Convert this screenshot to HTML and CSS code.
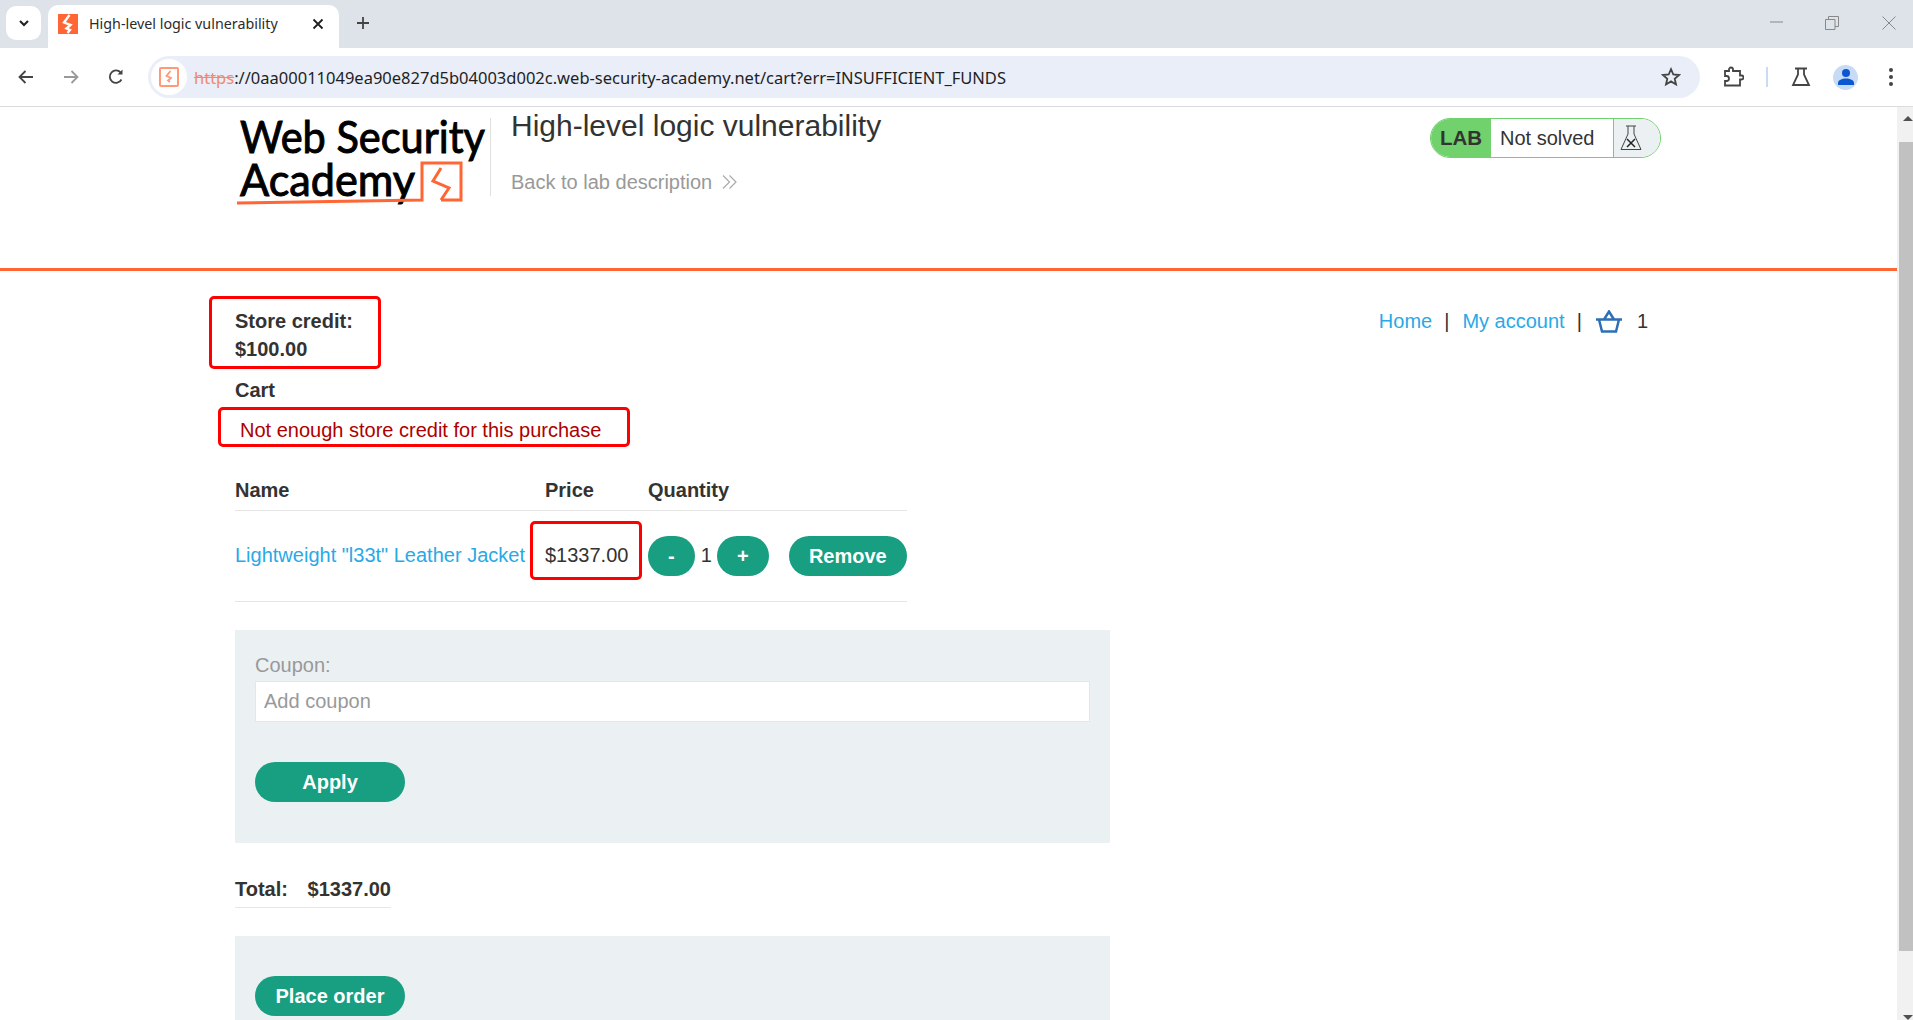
FILE: index.html
```html
<!DOCTYPE html>
<html lang="en">

<head>
    <meta charset="UTF-8">
    <meta name="viewport" content="width=device-width, initial-scale=1.0">
    <title>High-level logic vulnerability</title>
    <link rel="stylesheet" href="styles.css">
</head>

<body>
    <div class="tabstrip">
        <button class="tab-search">
            <svg width="14" height="14" viewBox="0 0 14 14"><path d="M3 5l4 4 4-4" fill="none" stroke="#1f1f1f" stroke-width="2"/></svg>
        </button>
        <div class="tab">
            <svg class="favicon" width="20" height="20" viewBox="0 0 20 20"><rect width="20" height="20" fill="#ff6633"/><path d="M11.500 1L6 8.500l6.500 2.500-4 3.500 3.500 1.500-2.500 3" fill="none" stroke="#fff" stroke-width="2.400"/></svg>
            <span class="tab-title">High-level logic vulnerability</span>
            <svg width="14" height="14" viewBox="0 0 14 14"><path d="M2.500 2.500l9 9M11.500 2.500l-9 9" stroke="#1f1f1f" stroke-width="1.800"/></svg>
        </div>
        <svg class="new-tab" width="16" height="16" viewBox="0 0 16 16"><path d="M8 2v12M2 8h12" stroke="#444" stroke-width="1.800"/></svg>
        <div class="window-controls">
            <svg width="18" height="12" viewBox="0 0 18 12"><path d="M1 6h13" stroke="#888" stroke-width="1"/></svg>
            <svg class="restore" width="14" height="14" viewBox="0 0 14 14"><path d="M.5 3.500h9.500v10H.5zM3.500 3.500v-3h10v10H10" fill="none" stroke="#888"/></svg>
            <svg width="14" height="14" viewBox="0 0 14 14"><path d="M.5.5l13 13M13.500.5l-13 13" stroke="#888"/></svg>
        </div>
    </div>

    <div class="toolbar">
        <svg class="nav-icon" width="20" height="20" viewBox="0 0 20 20"><path d="M17 10H4M9.500 4L3.500 10l6 6" fill="none" stroke="#444" stroke-width="1.800"/></svg>
        <svg class="nav-icon" width="20" height="20" viewBox="0 0 20 20"><path d="M3 10h13M10.500 4l6 6-6 6" fill="none" stroke="#999" stroke-width="1.800"/></svg>
        <svg class="nav-icon" width="20" height="20" viewBox="0 0 20 20"><path d="M15.500 12.500A6.200 6.200 0 1 1 15 6" fill="none" stroke="#444" stroke-width="1.800"/><path d="M16.500 2.500v5h-5z" fill="#444"/></svg>
        <div class="omnibox">
            <span class="site-icon">
                <svg width="20" height="20" viewBox="0 0 20 20"><rect x="1" y="1" width="18" height="18" rx="1" fill="#fff" stroke="#ff9a78" stroke-width="2"/><path d="M11.500 4L7.500 9l4.500 2-3 2.500 2 1.500" fill="none" stroke="#ff9a78" stroke-width="1.800"/></svg>
            </span>
            <span class="url"><span class="url-scheme">https</span>://0aa00011049ea90e827d5b04003d002c.web-security-academy.net/cart?err=INSUFFICIENT_FUNDS</span>
            <svg class="star" width="20" height="20" viewBox="0 0 20 20"><path d="M10 2.200l2.300 5.300 5.700.5-4.300 3.800 1.300 5.600-5-3-5 3 1.300-5.600L2 8l5.700-.5z" fill="none" stroke="#444" stroke-width="1.800"/></svg>
        </div>
        <div class="toolbar-actions">
            <svg class="extensions" width="22" height="22" viewBox="0 0 22 22"><path d="M3 5h4V3.500a2 2 0 0 1 4 0V5h7v4.500h1.500a2 2 0 0 1 0 4H18V19.500H3V15h1.500a2.500 2.500 0 0 0 0-5H3z" fill="none" stroke="#444" stroke-width="1.800"/></svg>
            <span class="toolbar-divider"></span>
            <svg class="labs" width="20" height="20" viewBox="0 0 20 20"><path d="M4 1.500h12M7 1.500v6L2 18h16L13 7.500v-6" fill="none" stroke="#444" stroke-width="1.800"/></svg>
            <span class="avatar">
                <svg width="18" height="18" viewBox="0 0 18 18"><circle cx="9" cy="5" r="4" fill="#0b57d0"/><path d="M1 17v-2c0-3 4-4.500 8-4.500s8 1.500 8 4.500v2z" fill="#0b57d0"/></svg>
            </span>
            <svg width="6" height="20" viewBox="0 0 6 20"><circle cx="3" cy="3" r="2" fill="#444"/><circle cx="3" cy="10" r="2" fill="#444"/><circle cx="3" cy="17" r="2" fill="#444"/></svg>
        </div>
    </div>

    <div class="viewport">
        <div class="page">
            <header class="academy-header">
                <svg class="logo" width="256" height="100" viewBox="0 0 256 100">
                    <text class="logo-text" x="8" y="46" textLength="245" lengthAdjust="spacingAndGlyphs">Web Security</text>
                    <text class="logo-text" x="8" y="89" textLength="175" lengthAdjust="spacingAndGlyphs">Academy</text>
                    <path d="M5 96c55-1 110-2 185-3V56h39v37h-20" fill="none" stroke="#ff6633" stroke-width="3"/>
                    <path d="M209 61l-8 13 16 7-8 12" fill="none" stroke="#ff6633" stroke-width="3"/>
                </svg>
                <div class="lab-title">
                    <h2>High-level logic vulnerability</h2>
                    <a class="back-link" href="#">Back to lab description
                        <svg width="16" height="16" viewBox="0 0 16 16"><path d="M1 1.500L7.500 8 1 14.500M7.500 1.500L14 8l-6.500 6.500" fill="none" stroke="#aaa" stroke-width="1.200"/></svg>
                    </a>
                </div>
                <div class="lab-status">
                    <span class="lab-label">LAB</span>
                    <span class="lab-state">Not solved</span>
                    <span class="lab-icon">
                        <svg width="22" height="26" viewBox="0 0 22 26"><path d="M6 1h10M8 1v8L1 24.500h20L14 9V1" fill="none" stroke="#444" stroke-width="1"/><path d="M7 14l8 8M15 14l-8 8" stroke="#222" stroke-width="1.500"/></svg>
                    </span>
                </div>
            </header>

            <main class="container">
                <div class="top-row">
                    <div class="store-credit marked">
                        <div>Store credit:</div>
                        <div>$100.00</div>
                    </div>
                    <nav class="site-nav">
                        <a href="#">Home</a>
                        <span class="sep">|</span>
                        <a href="#">My account</a>
                        <span class="sep">|</span>
                        <svg width="28" height="23" viewBox="0 0 28 23"><path d="M1 9.500h26M4 9.500l3 12h14l3-12M9 9.500L14 1.500l5 8" fill="none" stroke="#2c6fb5" stroke-width="2.500"/></svg>
                        <span class="cart-count">1</span>
                    </nav>
                </div>

                <p class="cart-title">Cart</p>
                <p class="error marked">Not enough store credit for this purchase</p>

                <table class="cart-table">
                    <colgroup>
                        <col class="col-name">
                        <col class="col-price">
                        <col class="col-qty">
                    </colgroup>
                    <thead>
                        <tr>
                            <th>Name</th>
                            <th>Price</th>
                            <th>Quantity</th>
                        </tr>
                    </thead>
                    <tbody>
                        <tr>
                            <td><a href="#">Lightweight "l33t" Leather Jacket</a></td>
                            <td><span class="price marked">$1337.00</span></td>
                            <td>
                                <div class="qty">
                                    <button class="btn btn-minus">-</button>
                                    <span class="qty-value">1</span>
                                    <button class="btn btn-plus">+</button>
                                    <button class="btn btn-remove">Remove</button>
                                </div>
                            </td>
                        </tr>
                    </tbody>
                </table>

                <form class="panel coupon-panel">
                    <label for="coupon">Coupon:</label>
                    <input id="coupon" type="text" placeholder="Add coupon">
                    <button type="button" class="btn btn-wide">Apply</button>
                </form>

                <div class="total">
                    <span>Total:</span>
                    <span>$1337.00</span>
                </div>

                <div class="panel order-panel">
                    <button class="btn btn-wide">Place order</button>
                </div>
            </main>
        </div>

        <div class="scrollbar">
            <span class="arrow-up"></span>
            <span class="thumb"></span>
            <span class="arrow-down"></span>
        </div>
    </div>
</body>

</html>
```

FILE: styles.css
```css
*,
*::before,
*::after {
    box-sizing: border-box;
}

html,
body {
    height: 100%;
}

body {
    margin: 0;
    display: flex;
    flex-direction: column;
    overflow: hidden;
    background-color: #fff;
    color: #333332;
    font-family: 'Liberation Sans', Arial, sans-serif;
    font-size: 20px;
}

a {
    color: #29a9e6;
    text-decoration: none;
}

svg {
    display: block;
    flex: none;
}

/* browser chrome */
.tabstrip {
    flex: none;
    height: 48px;
    display: flex;
    align-items: flex-start;
    background-color: #dee3ea;
}

.tab-search {
    width: 35px;
    height: 34px;
    margin: 6px 7px 0 6px;
    padding: 0;
    border: none;
    border-radius: 10px;
    background-color: #fff;
    display: flex;
    align-items: center;
    justify-content: center;
}

.tab {
    width: 291px;
    height: 43px;
    margin-top: 5px;
    padding: 0 14px 6px 10px;
    display: flex;
    align-items: center;
    background-color: #fff;
    border-radius: 10px 10px 0 0;
    font-family: 'Noto Sans', sans-serif;
    font-size: 14.3px;
    color: #2b2b2b;
}

.tab-title {
    margin-left: 11px;
    flex: 1;
}

.new-tab {
    margin: 15px 0 0 16px;
}

.window-controls {
    margin-left: auto;
    padding: 16px 17px 0 0;
    display: flex;
    gap: 38px;
}

.restore {
    margin-right: 5px;
}

.toolbar {
    flex: none;
    height: 59px;
    padding: 0 16px;
    display: flex;
    align-items: center;
    background-color: #fff;
    border-bottom: 1px solid #dcdcdc;
    border-radius: 8px 8px 0 0;
}

.nav-icon {
    margin-right: 25px;
}

.omnibox {
    width: 1552px;
    height: 42px;
    margin-left: -3px;
    padding: 0 19px 0 3px;
    display: flex;
    align-items: center;
    background-color: #e9eef8;
    border-radius: 21px;
    font-family: 'Noto Sans', sans-serif;
    font-size: 16.5px;
    color: #1f1f1f;
}

.site-icon {
    width: 36px;
    height: 36px;
    display: flex;
    align-items: center;
    justify-content: center;
    background-color: #fff;
    border-radius: 50%;
}

.url {
    margin-left: 7px;
    flex: 1;
    white-space: nowrap;
}

.url-scheme {
    color: #ee8b6f;
    text-decoration: line-through;
}

.toolbar-actions {
    margin-left: 22px;
    display: flex;
    align-items: center;
}

.toolbar-divider {
    width: 2px;
    height: 20px;
    margin: 0 23px 0 22px;
    background-color: #c9dcf5;
}

.avatar {
    width: 25px;
    height: 25px;
    margin: 0 30px 0 22px;
    display: flex;
    align-items: center;
    justify-content: center;
    background-color: #c7dbf7;
    border-radius: 50%;
}

/* page area */
.viewport {
    flex: 1;
    min-height: 0;
    display: flex;
}

.page {
    flex: 1;
    min-width: 0;
    overflow: hidden;
}

.scrollbar {
    flex: none;
    width: 16px;
    display: flex;
    flex-direction: column;
    align-items: flex-end;
    background-color: #f1f1f1;
}

.arrow-up {
    margin: 9px 0 0;
    border-left: 5px solid transparent;
    border-right: 5px solid transparent;
    border-bottom: 5px solid #505050;
}

.thumb {
    width: 14px;
    height: 809px;
    margin-top: 21px;
    background-color: #c1c1c1;
}

.arrow-down {
    margin-top: 64px;
    border-left: 5px solid transparent;
    border-right: 5px solid transparent;
    border-top: 5px solid #505050;
}

/* lab header */
.academy-header {
    height: 164px;
    padding: 0 236px 0 232px;
    display: flex;
    align-items: flex-start;
    border-bottom: 3px solid #ff6633;
}

.logo {
    overflow: visible;
}

.logo-text {
    font-family: 'Lato', sans-serif;
    font-size: 45px;
    font-weight: 400;
    fill: #000;
    stroke: #000;
    stroke-width: 1px;
}

.lab-title {
    margin-left: 2px;
    padding-left: 21px;
    position: relative;
    flex: 1;
}

.lab-title::before {
    content: "";
    position: absolute;
    left: 0;
    top: 11px;
    width: 1px;
    height: 78px;
    background-color: #e0e0e0;
}

.lab-title h2 {
    margin: 0;
    font-size: 30px;
    font-weight: 400;
    line-height: 38px;
}

.back-link {
    margin-top: 23px;
    display: flex;
    align-items: center;
    gap: 10px;
    color: #999;
    line-height: 28px;
}

.lab-status {
    width: 231px;
    height: 40px;
    margin-top: 11px;
    display: flex;
    border: 1px solid #70d16d;
    border-radius: 20px;
    overflow: hidden;
}

.lab-label {
    width: 60px;
    display: flex;
    align-items: center;
    justify-content: center;
    background-color: #70d16d;
    font-weight: 700;
    font-size: 20.5px;
}

.lab-state {
    width: 123px;
    padding-left: 9px;
    display: flex;
    align-items: center;
    border-right: 1px solid #70d16d;
}

.lab-icon {
    flex: 1;
    padding-left: 6px;
    display: flex;
    align-items: center;
    background-color: #ebf0f2;
}

/* cart content */
.container {
    padding: 36px 0 0 235px;
    margin-right: 249px;
}

.top-row {
    display: flex;
    justify-content: space-between;
}

.store-credit {
    font-weight: 700;
    line-height: 28px;
}

.marked {
    position: relative;
}

.marked::after {
    content: "";
    position: absolute;
    border: 3px solid #f00;
    border-radius: 5px;
    pointer-events: none;
}

.store-credit::after {
    left: -26px;
    top: -11px;
    width: 172px;
    height: 73px;
}

.site-nav {
    height: 28px;
    display: flex;
    align-items: center;
}

.sep {
    margin: 0 13px 0 12px;
}

.cart-count {
    margin-left: 14px;
}

.cart-title {
    margin: 13px 0 0;
    font-weight: 700;
    line-height: 28px;
}

.error {
    margin: 12px 0 0 5px;
    color: #ae0000;
    line-height: 28px;
}

.error::after {
    left: -22px;
    top: -9px;
    width: 412px;
    height: 40px;
}

.cart-table {
    width: 672px;
    margin: 34px 0 0;
    table-layout: fixed;
    border-collapse: collapse;
}

.col-name {
    width: 310px;
}

.col-price {
    width: 103px;
}

.cart-table th {
    height: 32px;
    padding: 0 0 6px;
    text-align: left;
    font-weight: 700;
    border-bottom: 1px solid #e6e6e6;
}

.cart-table td {
    height: 91px;
    padding: 0;
    border-bottom: 1px solid #e6e6e6;
}

.price::after {
    left: -15px;
    top: -23px;
    width: 112px;
    height: 59px;
}

.qty {
    display: flex;
    align-items: center;
}

.qty-value {
    margin: 0 5px 0 6px;
}

.btn {
    height: 40px;
    padding: 1px 0 0;
    border: none;
    border-radius: 20px;
    background-color: #189e80;
    color: #fff;
    font-family: inherit;
    font-size: 20px;
    font-weight: 700;
}

.btn-minus {
    width: 47px;
}

.btn-plus {
    width: 52px;
}

.btn-remove {
    width: 119px;
    margin-left: 20px;
}

.btn-wide {
    display: block;
    width: 150px;
}

.panel {
    width: 875px;
    padding: 0 20px;
    background-color: #ebf0f2;
}

.coupon-panel {
    height: 213px;
    margin-top: 28px;
    padding-top: 21px;
}

.coupon-panel label {
    display: block;
    color: #999;
    line-height: 28px;
}

.coupon-panel input {
    width: 100%;
    height: 41px;
    margin: 2px 0 40px;
    padding: 0 8px;
    display: block;
    border: 1px solid #e6e6e6;
    font-family: inherit;
    font-size: 20px;
}

.coupon-panel input::placeholder {
    color: #999;
}

.total {
    width: 156px;
    height: 65px;
    padding-top: 32px;
    display: flex;
    justify-content: space-between;
    font-weight: 700;
    line-height: 28px;
    border-bottom: 1px solid #e6e6e6;
}

.order-panel {
    margin-top: 28px;
    padding-top: 40px;
    height: 90px;
}
```
